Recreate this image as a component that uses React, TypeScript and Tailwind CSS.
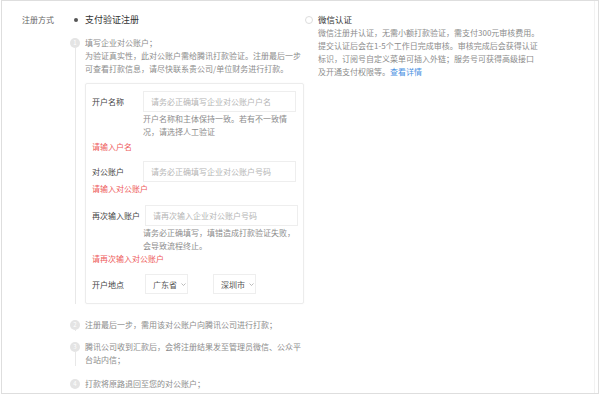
import type { ReactNode } from "react"

const font = {
  fontFamily: '"Noto Sans CJK SC", "Noto Sans", sans-serif',
}

type StepProps = {
  num: number
  last?: boolean
  gap?: string
  children: ReactNode
}

const Step = ({ num, last, gap = "pb-[9px]", children }: StepProps) => (
  <div className={`flex ${last ? "" : gap}`}>
    {/* timeline */}
    <div className="flex w-[10px] flex-col items-center">
      <div className="mt-[1.5px] flex h-[10px] w-[10px] shrink-0 items-center justify-center rounded-full bg-[#e4e4e4] text-[6px] leading-none text-white">
        {num}
      </div>
      {!last && <div className="w-px flex-1 bg-[#e8e8e8]" />}
    </div>
    <div className="ml-[5px] text-[8px] leading-[13px] text-[#8c8c8c]">
      {children}
    </div>
  </div>
)

type FieldProps = {
  label: string
  placeholder: string
  inputLeft?: string
}

const Field = ({ label, placeholder, inputLeft = "w-[51px]" }: FieldProps) => (
  <div className="flex items-center">
    <div className={`${inputLeft} shrink-0 text-[8px] text-[#444]`}>
      {label}
    </div>
    <div className="flex h-[21px] w-[153px] items-center border border-[#eeeeee] pl-[7px] text-[8px] whitespace-nowrap text-[#b5b5b5]">
      {placeholder}
    </div>
  </div>
)

const Err = ({ children, className = "" }: { children: ReactNode; className?: string }) => (
  <div className={`text-[8px] leading-[13px] text-[#ee5a5a] ${className}`}>
    {children}
  </div>
)

const Select = ({ value }: { value: string }) => (
  <div className="flex h-[20px] w-[43px] items-center border border-[#eeeeee] pl-[7px] text-[8px] text-[#555]">
    {value}
    <svg className="ml-[4px]" width="5" height="3" viewBox="0 0 5 3">
      <path d="M0.5 0.5 L2.5 2.5 L4.5 0.5" fill="none" stroke="#aaa" strokeWidth="0.8" />
    </svg>
  </div>
)

export default function App() {
  return (
    <div className="h-[395px] w-[599px] bg-white" style={font}>
      <div className="ml-[1px] flex h-[394px] w-[598px] border border-[#dedede]">
        <div className="flex flex-1 pt-[12px]">
          {/* label column */}
          <div className="w-[68px] pl-[20px] text-[8px] leading-[13px] whitespace-nowrap text-[#666]">
            注册方式
          </div>

          {/* option: payment verification */}
          <div className="w-[235px]">
            <div className="flex h-[13px] items-center">
              <div className="flex w-[11px] justify-center">
                <div className="h-[4px] w-[4px] rounded-full bg-[#555]" />
              </div>
              <div className="ml-[4px] text-[9px] whitespace-nowrap text-[#333]">
                支付验证注册
              </div>
            </div>

            <div className="mt-[10px] whitespace-nowrap">
              <Step num={1} gap="pb-[14px]">
                <div>填写企业对公账户；</div>
                <div>为验证真实性，此对公账户需给腾讯打款验证。注册最后一步</div>
                <div>可查看打款信息，请尽快联系贵公司/单位财务进行打款。</div>

                <div className="mt-[8px] w-[219px] rounded-[2px] border border-[#ececec] pt-[7px] pb-[9px] pl-[6px] shadow-[0_0_2px_rgba(0,0,0,0.04)]">
                  <Field label="开户名称" placeholder="请务必正确填写企业对公账户户名" />
                  <div className="pl-[51px] text-[#8c8c8c]">
                    <div>开户名称和主体保持一致。若有不一致情</div>
                    <div>况，请选择人工验证</div>
                  </div>
                  <Err className="mt-[2px]">请输入户名</Err>

                  <div className="mt-[8px]">
                    <Field label="对公账户" placeholder="请务必正确填写企业对公账户号码" />
                  </div>
                  <Err>请输入对公账户</Err>

                  <div className="mt-[10px]">
                    <Field
                      label="再次输入账户"
                      placeholder="请再次输入企业对公账户号码"
                      inputLeft="w-[53px]"
                    />
                  </div>
                  <div className="pl-[51px] text-[#8c8c8c]">
                    <div>请务必正确填写，填错造成打款验证失败，</div>
                    <div>会导致流程终止。</div>
                  </div>
                  <Err>请再次输入对公账户</Err>

                  <div className="mt-[9px] flex items-center">
                    <div className="w-[53px] text-[8px] text-[#444]">开户地点</div>
                    <Select value="广东省" />
                    <div className="ml-[25px]">
                      <Select value="深圳市" />
                    </div>
                  </div>
                </div>
              </Step>
              <Step num={2} gap="pb-[9px]">
                <div>注册最后一步，需用该对公账户向腾讯公司进行打款；</div>
              </Step>
              <Step num={3} gap="pb-[11px]">
                <div>腾讯公司收到汇款后，会将注册结果发至管理员微信、公众平</div>
                <div>台站内信；</div>
              </Step>
              <Step num={4} last>
                <div>打款将原路退回至您的对公账户；</div>
              </Step>
            </div>
          </div>

          {/* option: wechat verification */}
          <div className="flex">
            <div className="mt-[2.5px] h-[8px] w-[8px] rounded-full border border-[#dddddd]" />
            <div className="ml-[5px] text-[8px] leading-[13px] whitespace-nowrap text-[#8c8c8c]">
              <div className="text-[8.5px] text-[#333]">微信认证</div>
              <div>微信注册并认证，无需小额打款验证，需支付300元审核费用。</div>
              <div>提交认证后会在1-5个工作日完成审核。审核完成后会获得认证</div>
              <div>标识，订阅号自定义菜单可插入外链；服务号可获得高级接口</div>
              <div>
                及开通支付权限等。
                <span className="text-[#4a90e2]">查看详情</span>
              </div>
            </div>
          </div>
        </div>
        <div className="w-[4px] border-l border-[#f2f2f2]" />
      </div>
    </div>
  )
}
